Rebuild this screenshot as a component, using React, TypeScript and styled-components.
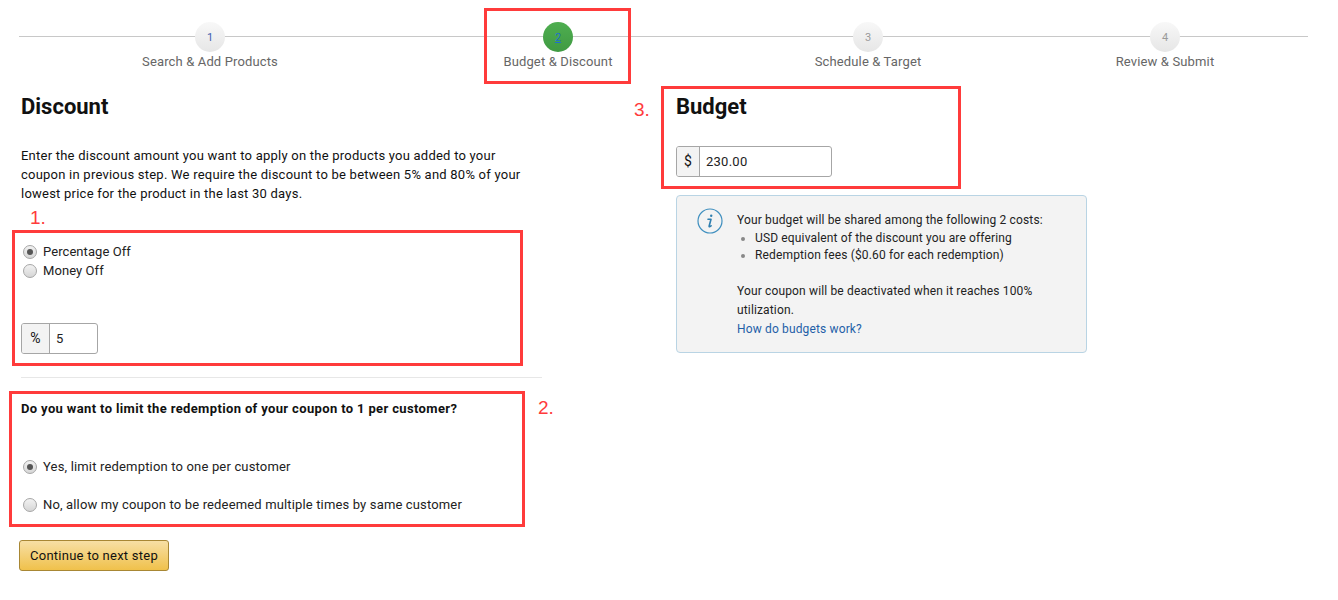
import React from "react";
import styled, { createGlobalStyle } from "styled-components";

const GlobalStyle = createGlobalStyle`
  html, body {
    margin: 0;
    padding: 0;
    background: #fff;
  }
  body {
    font-family: Roboto, "Liberation Sans", sans-serif;
    font-size: 13px;
    line-height: 19px;
    color: #111;
  }
`;

const Page = styled.div`
  width: 1338px;
  height: 600px;
  overflow: hidden;
`;

const Stepper = styled.div`
  position: relative;
  display: grid;
  grid-template-columns: 382px 314px 306px 288px;
  width: 1289px;
  height: 86px;
  margin-left: 19px;
  box-sizing: border-box;
  padding-top: 22px;

  &::before {
    content: "";
    position: absolute;
    left: 0;
    right: 0;
    top: 36px;
    height: 1px;
    background: #c8c8c8;
  }
`;

const Step = styled.div`
  position: relative;
  display: flex;
  flex-direction: column;
  align-items: center;
`;

const StepCircle = styled.div<{ $state: "done" | "active" | "todo" }>`
  width: 30px;
  height: 30px;
  border-radius: 50%;
  display: flex;
  align-items: center;
  justify-content: center;
  font-size: 11px;
  background: ${p =>
    p.$state === "active"
      ? "linear-gradient(#4fae50, #3f9a42)"
      : "linear-gradient(#f8f8f8, #e6e6e6)"};
  color: ${p => (p.$state === "todo" ? "#9a9a9a" : p.$state === "active" ? "#1e6fd0" : "#3d5fb0")};
  text-decoration: ${p => (p.$state === "active" ? "underline" : "none")};
`;

const StepLabel = styled.div`
  color: #666;
  letter-spacing: 0.14px;
`;

const StepHighlight = styled.div`
  position: absolute;
  left: 83px;
  top: -14px;
  width: 147px;
  height: 76px;
  box-sizing: border-box;
  border: 3px solid #ff3b3b;
`;

const Columns = styled.div`
  display: flex;
  align-items: flex-start;
  padding-left: 10px;
`;

const LeftColumn = styled.div`
  width: 532px;
  padding-top: 2px;
`;

const RightColumn = styled.div`
  margin-left: 119px;
`;

const Heading = styled.h2`
  margin: 0 0 0 11px;
  font-size: 22px;
  line-height: 38px;
  font-weight: 700;
  color: #111;
`;

const BudgetHeading = styled(Heading)`
  margin-left: 0;
  line-height: 36px;
`;

const Intro = styled.p`
  margin: 20px 0 0 11px;
  width: 510px;
  letter-spacing: 0.23px;
`;

const Annotated = styled.section<{ $indent: number; $width: number; $height: number }>`
  position: relative;
  box-sizing: border-box;
  margin-left: ${p => p.$indent}px;
  width: ${p => p.$width}px;
  height: ${p => p.$height}px;
  border: 3px solid #ff3b3b;
`;

const Marker = styled.span<{ $left: number; $top: number }>`
  position: absolute;
  left: ${p => p.$left}px;
  top: ${p => p.$top}px;
  font-family: "Liberation Sans", sans-serif;
  font-size: 19px;
  line-height: 20px;
  color: #ff3b3b;
`;

const DiscountBox = styled(Annotated)`
  margin-top: 27px;
  padding: 9px 0 0 6px;
`;

const RadioRow = styled.label<{ $spacing?: number }>`
  display: flex;
  align-items: center;
  gap: 6px;
  height: 19px;
  color: #222;
  letter-spacing: ${p => p.$spacing ?? 0.07}px;
`;

const Radio = styled.span<{ $checked?: boolean }>`
  position: relative;
  display: block;
  box-sizing: border-box;
  width: 14px;
  height: 14px;
  margin-left: 2px;
  border-radius: 50%;
  border: 1px solid #a6a6a6;
  background: linear-gradient(#f2f2f2, #d6d6d6);

  &::after {
    content: "";
    display: ${p => (p.$checked ? "block" : "none")};
    position: absolute;
    left: 3px;
    top: 3px;
    width: 6px;
    height: 6px;
    border-radius: 50%;
    background: #555;
  }
`;

const InputGroup = styled.div<{ $width: number; $addon: number; $offset: number }>`
  display: grid;
  grid-template-columns: ${p => p.$addon}px 1fr;
  box-sizing: border-box;
  width: ${p => p.$width}px;
  height: 31px;
  margin-top: ${p => p.$offset}px;
  border: 1px solid #a6a6a6;
  border-radius: 3px;
  overflow: hidden;
`;

const Addon = styled.div`
  display: flex;
  align-items: center;
  justify-content: center;
  background: #f3f3f3;
  border-right: 1px solid #a6a6a6;
  color: #111;
  font-size: 14px;
`;

const Value = styled.div`
  display: flex;
  align-items: center;
  padding-left: 6px;
  color: #222;
  letter-spacing: 0.25px;
`;

const Divider = styled.hr`
  margin: 11px 0 13px 11px;
  width: 521px;
  height: 1px;
  border: 0;
  background: #e7e7e7;
`;

const RedemptionBox = styled(Annotated)`
  padding: 5px 0 0 9px;
`;

const Question = styled.div`
  font-weight: 700;
  color: #111;
  letter-spacing: 0.36px;
`;

const RedemptionOption = styled(RadioRow)<{ $gap: number }>`
  margin-top: ${p => p.$gap}px;
`;

const ContinueButton = styled.button`
  display: block;
  box-sizing: border-box;
  width: 150px;
  height: 31px;
  margin: 13px 0 0 9px;
  padding: 0;
  border: 1px solid #a88734;
  border-radius: 3px;
  background: linear-gradient(#f7dfa5, #f0c14b);
  font: inherit;
  color: #111;
  letter-spacing: 0.24px;
`;

const BudgetBox = styled(Annotated)`
  padding-left: 12px;
`;

const InfoBox = styled.aside`
  display: flex;
  box-sizing: border-box;
  width: 411px;
  height: 158px;
  margin: 6px 0 0 15px;
  padding: 12px 0 0 20px;
  background: #f3f3f3;
  border: 1px solid #b9d4e4;
  border-radius: 4px;
  font-size: 12px;
  color: #222;
  letter-spacing: 0.145px;
`;

const InfoIcon = styled.svg`
  flex: none;
  width: 26px;
  height: 26px;
`;

const InfoText = styled.div`
  margin-left: 14px;
  padding-top: 3px;
  width: 320px;
  line-height: 19px;
`;

const InfoLead = styled.div`
  line-height: 19px;
`;

const InfoList = styled.ul`
  margin: 0 0 18px;
  padding: 0 0 0 18px;
  line-height: 17px;

  li::marker {
    color: #888;
  }
`;

const InfoLink = styled.a`
  display: block;
  color: #1f5fa8;
  text-decoration: none;
`;

export default function App() {
  return (
    <Page>
      <GlobalStyle />
      <Stepper>
        <Step>
          <StepCircle $state="done">1</StepCircle>
          <StepLabel>Search &amp; Add Products</StepLabel>
        </Step>
        <Step>
          <StepCircle $state="active">2</StepCircle>
          <StepLabel>Budget &amp; Discount</StepLabel>
          <StepHighlight />
        </Step>
        <Step>
          <StepCircle $state="todo">3</StepCircle>
          <StepLabel>Schedule &amp; Target</StepLabel>
        </Step>
        <Step>
          <StepCircle $state="todo">4</StepCircle>
          <StepLabel>Review &amp; Submit</StepLabel>
        </Step>
      </Stepper>
      <Columns>
        <LeftColumn>
          <Heading>Discount</Heading>
          <Intro>
            Enter the discount amount you want to apply on the products you added to your
            <br />
            coupon in previous step. We require the discount to be between 5% and 80% of your
            <br />
            lowest price for the product in the last 30 days.
          </Intro>
          <DiscountBox $indent={2} $width={511} $height={136}>
            <Marker $left={15} $top={-25}>1.</Marker>
            <RadioRow>
              <Radio $checked />
              Percentage Off
            </RadioRow>
            <RadioRow>
              <Radio />
              Money Off
            </RadioRow>
            <InputGroup $width={77} $addon={28} $offset={43}>
              <Addon>%</Addon>
              <Value>5</Value>
            </InputGroup>
          </DiscountBox>
          <Divider />
          <RedemptionBox $indent={-1} $width={516} $height={136}>
            <Marker $left={526} $top={4}>2.</Marker>
            <Question>Do you want to limit the redemption of your coupon to 1 per customer?</Question>
            <RedemptionOption $gap={39} $spacing={0.17}>
              <Radio $checked />
              Yes, limit redemption to one per customer
            </RedemptionOption>
            <RedemptionOption $gap={19} $spacing={0.15}>
              <Radio />
              No, allow my coupon to be redeemed multiple times by same customer
            </RedemptionOption>
          </RedemptionBox>
          <ContinueButton>Continue to next step</ContinueButton>
        </LeftColumn>
        <RightColumn>
          <BudgetBox $indent={0} $width={300} $height={103}>
            <Marker $left={-30} $top={11}>3.</Marker>
            <BudgetHeading>Budget</BudgetHeading>
            <InputGroup $width={156} $addon={23} $offset={21}>
              <Addon>$</Addon>
              <Value>230.00</Value>
            </InputGroup>
          </BudgetBox>
          <InfoBox>
            <InfoIcon viewBox="0 0 26 26" fill="none">
              <circle cx="13" cy="13" r="12" stroke="#3f8fbf" strokeWidth="1.2" />
              <path
                d="M11 11.2h3l-1.9 7c-.1.5.3.7.8.4l1.2-.8"
                stroke="#2f7fb0"
                strokeWidth="1.6"
                strokeLinecap="round"
                strokeLinejoin="round"
              />
              <circle cx="14.2" cy="7.8" r="1.2" fill="#2f7fb0" />
            </InfoIcon>
            <InfoText>
              <InfoLead>Your budget will be shared among the following 2 costs:</InfoLead>
              <InfoList>
                <li>USD equivalent of the discount you are offering</li>
                <li>Redemption fees ($0.60 for each redemption)</li>
              </InfoList>
              Your coupon will be deactivated when it reaches 100% utilization.
              <InfoLink href="#">How do budgets work?</InfoLink>
            </InfoText>
          </InfoBox>
        </RightColumn>
      </Columns>
    </Page>
  );
}
